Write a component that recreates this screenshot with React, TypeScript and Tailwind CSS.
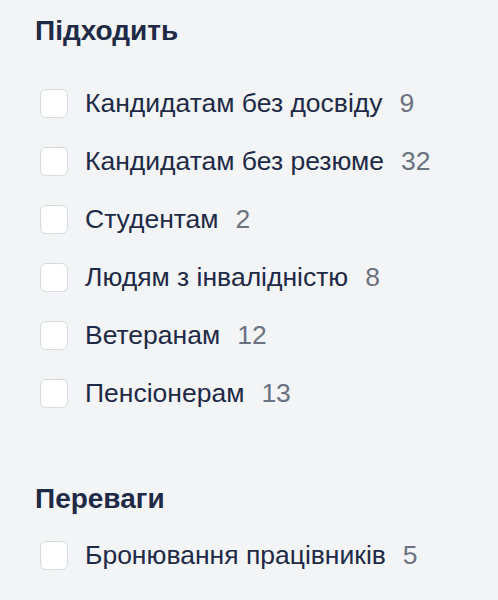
const groups = [
  {
    title: "Підходить",
    items: [
      { label: "Кандидатам без досвіду", count: 9 },
      { label: "Кандидатам без резюме", count: 32 },
      { label: "Студентам", count: 2 },
      { label: "Людям з інвалідністю", count: 8 },
      { label: "Ветеранам", count: 12 },
      { label: "Пенсіонерам", count: 13 },
    ],
  },
  {
    title: "Переваги",
    items: [{ label: "Бронювання працівників", count: 5 }],
  },
]

export default function App() {
  return (
    <div className="min-h-screen bg-[#f3f4f6] text-[#1e2a46] font-['Liberation_Sans',Arial,sans-serif] pl-[35px] pt-[10px]">
      <h3 className="text-[28px] font-bold leading-[42px]">{groups[0].title}</h3>
      <ul className="mt-[37px] flex flex-col gap-[29px] pl-[5px]">
        {groups[0].items.map((it) => (
          <Row key={it.label} {...it} />
        ))}
      </ul>
      <h3 className="mt-[70px] text-[28px] font-bold leading-[42px]">{groups[1].title}</h3>
      <ul className="mt-[21px] flex flex-col gap-[29px] pl-[5px]">
        {groups[1].items.map((it) => (
          <Row key={it.label} {...it} />
        ))}
      </ul>
    </div>
  )
}

function Row({ label, count }: { label: string; count: number }) {
  return (
    <li className="flex items-center h-[29px]">
      <span className="w-[28px] h-[29px] rounded-[6px] border border-[#d7dae0] bg-white shrink-0" />
      <span className="ml-[17px] text-[26.5px] leading-none">{label}</span>
      <span className="ml-[17px] text-[26.5px] leading-none text-[#6b7280]">{count}</span>
    </li>
  )
}
